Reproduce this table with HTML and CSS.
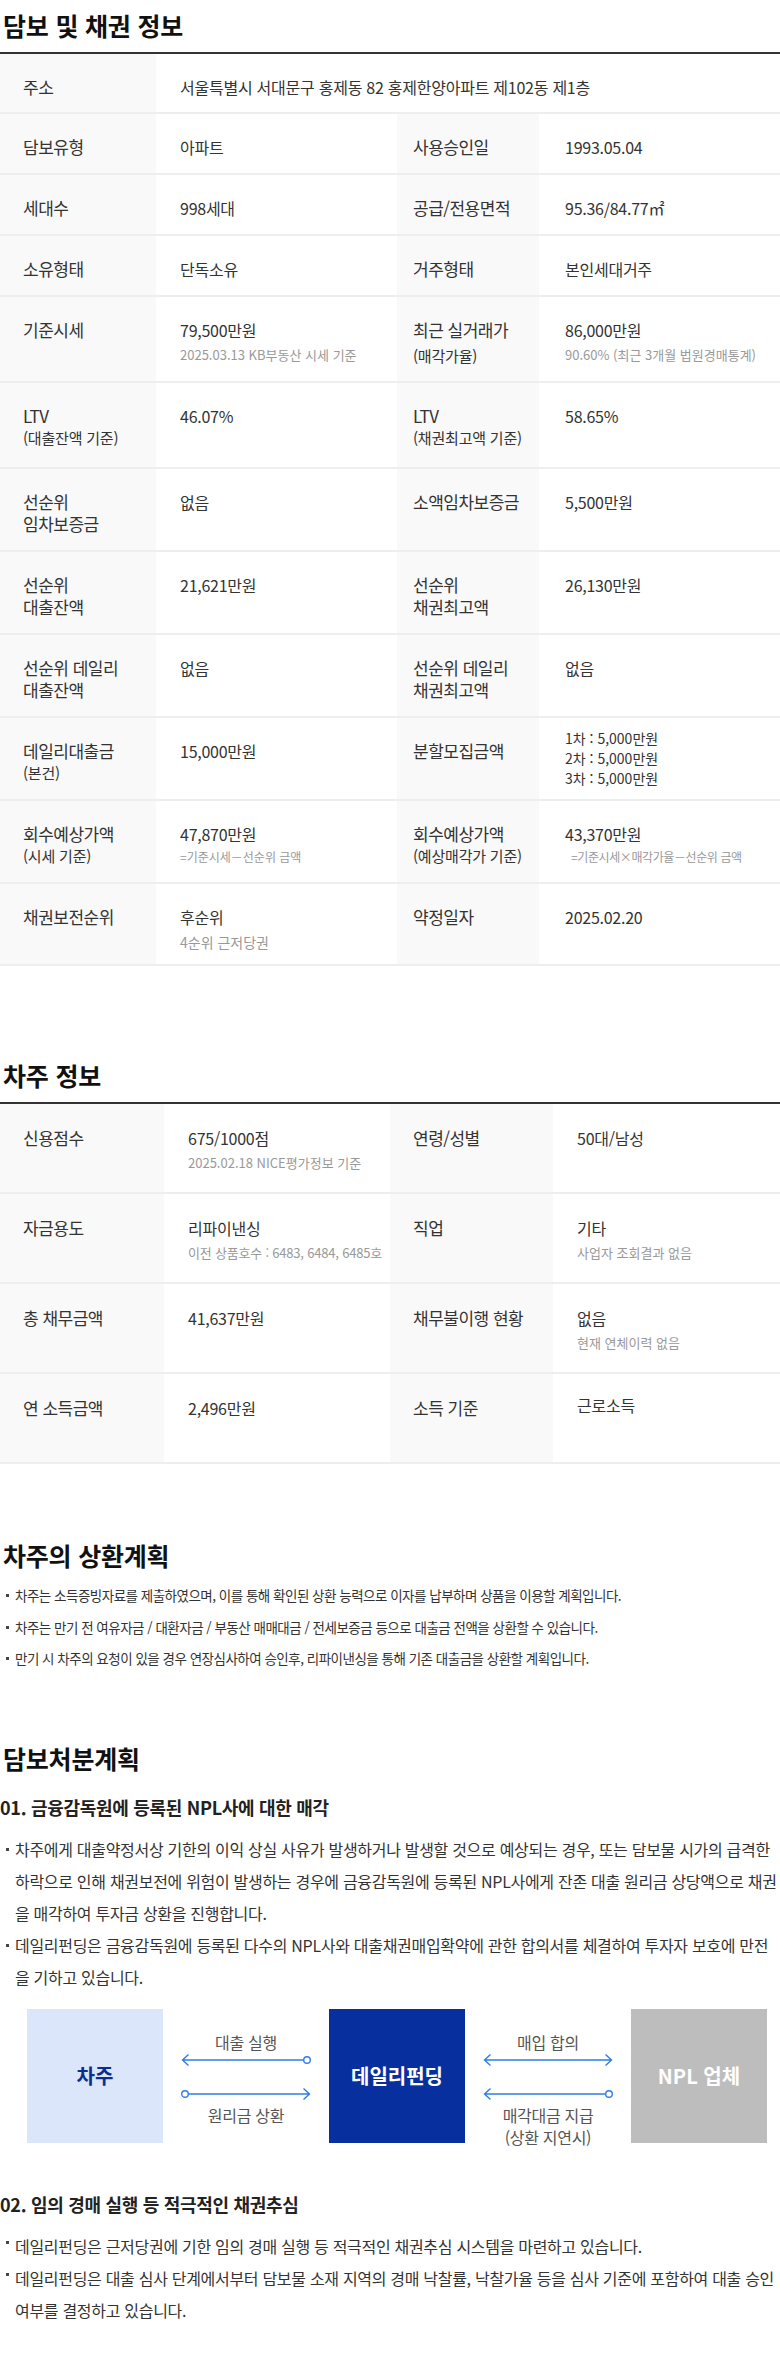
FILE: index.html
```html
<!DOCTYPE html>
<html lang="ko">
<head>
<meta charset="utf-8">
<title>담보 및 채권 정보</title>
<link rel="stylesheet" href="styles.css">
</head>
<body>
<main class="page">

  <section class="sec">
    <h2 class="sec-title">담보 및 채권 정보</h2>
    <div class="info info--a">
      <div class="row row--full">
        <div class="th">주소</div>
        <div class="td">서울특별시 서대문구 홍제동 82 홍제한양아파트 제102동 제1층</div>
      </div>
      <div class="row">
        <div class="th">담보유형</div>
        <div class="td">아파트</div>
        <div class="th">사용승인일</div>
        <div class="td">1993.05.04</div>
      </div>
      <div class="row">
        <div class="th">세대수</div>
        <div class="td">998세대</div>
        <div class="th">공급/전용면적</div>
        <div class="td">95.36/84.77㎡</div>
      </div>
      <div class="row">
        <div class="th">소유형태</div>
        <div class="td">단독소유</div>
        <div class="th">거주형태</div>
        <div class="td">본인세대거주</div>
      </div>
      <div class="row row--tall">
        <div class="th">기준시세</div>
        <div class="td">79,500만원<p class="note">2025.03.13 KB부동산 시세 기준</p></div>
        <div class="th th--loose">최근 실거래가<span class="th-sub">(매각가율)</span></div>
        <div class="td">86,000만원<p class="note">90.60% (최근 3개월 법원경매통계)</p></div>
      </div>
      <div class="row row--tall">
        <div class="th">LTV<span class="th-sub">(대출잔액 기준)</span></div>
        <div class="td">46.07%</div>
        <div class="th">LTV<span class="th-sub">(채권최고액 기준)</span></div>
        <div class="td">58.65%</div>
      </div>
      <div class="row">
        <div class="th">선순위<br>임차보증금</div>
        <div class="td">없음</div>
        <div class="th th--shift">소액임차보증금</div>
        <div class="td">5,500만원</div>
      </div>
      <div class="row">
        <div class="th">선순위<br>대출잔액</div>
        <div class="td">21,621만원</div>
        <div class="th">선순위<br>채권최고액</div>
        <div class="td">26,130만원</div>
      </div>
      <div class="row">
        <div class="th">선순위 데일리<br>대출잔액</div>
        <div class="td">없음</div>
        <div class="th">선순위 데일리<br>채권최고액</div>
        <div class="td">없음</div>
      </div>
      <div class="row">
        <div class="th">데일리대출금<span class="th-sub">(본건)</span></div>
        <div class="td">15,000만원</div>
        <div class="th">분할모집금액</div>
        <div class="td td--center">
          <ul class="split">
            <li>1차 : 5,000만원</li>
            <li>2차 : 5,000만원</li>
            <li>3차 : 5,000만원</li>
          </ul>
        </div>
      </div>
      <div class="row">
        <div class="th">회수예상가액<span class="th-sub">(시세 기준)</span></div>
        <div class="td">47,870만원<p class="note note--xs">=기준시세－선순위 금액</p></div>
        <div class="th">회수예상가액<span class="th-sub">(예상매각가 기준)</span></div>
        <div class="td">43,370만원<p class="note note--xs note--indent">=기준시세×매각가율－선순위 금액</p></div>
      </div>
      <div class="row">
        <div class="th">채권보전순위</div>
        <div class="td td--tight">후순위<p class="note note--md">4순위 근저당권</p></div>
        <div class="th">약정일자</div>
        <div class="td">2025.02.20</div>
      </div>
    </div>
  </section>

  <section class="sec sec--borrower">
    <h2 class="sec-title">차주 정보</h2>
    <div class="info info--b">
      <div class="row">
        <div class="th">신용점수</div>
        <div class="td">675/1000점<p class="note">2025.02.18 NICE평가정보 기준</p></div>
        <div class="th">연령/성별</div>
        <div class="td">50대/남성</div>
      </div>
      <div class="row">
        <div class="th">자금용도</div>
        <div class="td">리파이낸싱<p class="note note--nowrap">이전 상품호수 : 6483, 6484, 6485호</p></div>
        <div class="th">직업</div>
        <div class="td">기타<p class="note">사업자 조회결과 없음</p></div>
      </div>
      <div class="row">
        <div class="th">총 채무금액</div>
        <div class="td">41,637만원</div>
        <div class="th">채무불이행 현황</div>
        <div class="td">없음<p class="note">현재 연체이력 없음</p></div>
      </div>
      <div class="row">
        <div class="th">연 소득금액</div>
        <div class="td">2,496만원</div>
        <div class="th">소득 기준</div>
        <div class="td td--up">근로소득</div>
      </div>
    </div>
  </section>

  <section class="sec sec--repay">
    <h2 class="sec-title sec-title--plain">차주의 상환계획</h2>
    <ul class="bullets bullets--sm">
      <li>차주는 소득증빙자료를 제출하였으며, 이를 통해 확인된 상환 능력으로 이자를 납부하며 상품을 이용할 계획입니다.</li>
      <li>차주는 만기 전 여유자금 / 대환자금 / 부동산 매매대금 / 전세보증금 등으로 대출금 전액을 상환할 수 있습니다.</li>
      <li>만기 시 차주의 요청이 있을 경우 연장심사하여 승인후, 리파이낸싱을 통해 기존 대출금을 상환할 계획입니다.</li>
    </ul>
  </section>

  <section class="sec sec--dispose">
    <h2 class="sec-title sec-title--plain">담보처분계획</h2>

    <h3 class="sub-title">01. 금융감독원에 등록된 NPL사에 대한 매각</h3>
    <ul class="bullets">
      <li>차주에게 대출약정서상 기한의 이익 상실 사유가 발생하거나 발생할 것으로 예상되는 경우, 또는 담보물 시가의 급격한 하락으로 인해 채권보전에 위험이 발생하는 경우에 금융감독원에 등록된 NPL사에게 잔존 대출 원리금 상당액으로 채권을 매각하여 투자금 상환을 진행합니다.</li>
      <li>데일리펀딩은 금융감독원에 등록된 다수의 NPL사와 대출채권매입확약에 관한 합의서를 체결하여 투자자 보호에 만전을 기하고 있습니다.</li>
    </ul>

    <div class="flow">
      <div class="box box--borrower">차주</div>
      <div class="link">
        <span class="link-label">대출 실행</span>
        <svg class="arrow" width="130" height="14" viewBox="0 0 130 14"><path d="M7.5 1.5 L1.5 7 L7.5 12.5 M1.5 7 H122.5" fill="none" stroke="#2f7de6" stroke-width="1.4"/><circle cx="126" cy="7" r="3.3" fill="#fff" stroke="#2f7de6" stroke-width="1.4"/></svg>
        <svg class="arrow arrow--second" width="130" height="14" viewBox="0 0 130 14"><circle cx="4" cy="7" r="3.3" fill="#fff" stroke="#2f7de6" stroke-width="1.4"/><path d="M7.5 7 H128.5 M122.5 1.5 L128.5 7 L122.5 12.5" fill="none" stroke="#2f7de6" stroke-width="1.4"/></svg>
        <span class="link-label link-label--below">원리금 상환</span>
      </div>
      <div class="box box--daily">데일리펀딩</div>
      <div class="link">
        <span class="link-label">매입 합의</span>
        <svg class="arrow" width="130" height="14" viewBox="0 0 130 14"><path d="M7.5 1.5 L1.5 7 L7.5 12.5 M1.5 7 H128.5 M122.5 1.5 L128.5 7 L122.5 12.5" fill="none" stroke="#2f7de6" stroke-width="1.4"/></svg>
        <svg class="arrow arrow--second" width="130" height="14" viewBox="0 0 130 14"><path d="M7.5 1.5 L1.5 7 L7.5 12.5 M1.5 7 H122.5" fill="none" stroke="#2f7de6" stroke-width="1.4"/><circle cx="126" cy="7" r="3.3" fill="#fff" stroke="#2f7de6" stroke-width="1.4"/></svg>
        <span class="link-label link-label--below">매각대금 지급<br>(상환 지연시)</span>
      </div>
      <div class="box box--npl">NPL 업체</div>
    </div>

    <h3 class="sub-title sub-title--second">02. 임의 경매 실행 등 적극적인 채권추심</h3>
    <ul class="bullets bullets--high">
      <li>데일리펀딩은 근저당권에 기한 임의 경매 실행 등 적극적인 채권추심 시스템을 마련하고 있습니다.</li>
      <li>데일리펀딩은 대출 심사 단계에서부터 담보물 소재 지역의 경매 낙찰률, 낙찰가율 등을 심사 기준에 포함하여 대출 승인 여부를 결정하고 있습니다.</li>
    </ul>
  </section>

</main>
</body>
</html>
```

FILE: styles.css
```css
* {
  box-sizing: border-box;
  margin: 0;
  padding: 0;
}

html, body {
  background: #fff;
}

body {
  margin: 0;
  font-family: "Noto Sans CJK KR", "Noto Sans", sans-serif;
  color: #333;
}

.page {
  width: 780px;
  padding-bottom: 50px;
}

/* section titles */
.sec-title {
  font-size: 25px;
  font-weight: 700;
  line-height: 34px;
  padding: 8px 0 10px 3px;
  color: #111;
  letter-spacing: -0.2px;
}

.sec-title--plain {
  padding-bottom: 8px;
}

.sec--borrower {
  margin-top: 84px;
}

.sec--repay {
  margin-top: 66px;
}

.sec--dispose {
  margin-top: 58px;
}

/* info tables */
.info {
  border-top: 2px solid #333;
}

.row {
  display: grid;
  border-bottom: 2px solid #eeeeee;
}

.info--a .row {
  grid-template-columns: 156px 241px 142px 241px;
  min-height: 61px;
}

.info--a .row--full {
  grid-template-columns: 156px 624px;
  min-height: 60px;
}

.info--a .row--tall {
  min-height: 86px;
}

.info--b .row {
  grid-template-columns: 164px 226px 163px 227px;
  min-height: 90px;
}

.th,
.td {
  line-height: 22px;
  padding: 22px 8px 15px 24px;
  color: #333;
}

.row--full .th,
.row--full .td {
  padding-bottom: 14px;
}

.th {
  background: #f9f9f9;
  padding-left: 23px;
  font-size: 17px;
  letter-spacing: -0.5px;
}

.td {
  font-size: 16px;
  letter-spacing: -0.25px;
}

.th-sub {
  display: block;
  font-size: 15px;
  letter-spacing: -0.2px;
}

.info--a .th:nth-child(3) {
  padding-left: 16px;
}

.info--a .td:nth-child(4) {
  padding-left: 26px;
}

.th--loose {
  line-height: 26px;
  padding-top: 20px;
  padding-bottom: 12px;
}

.info--a .th--shift {
  padding-left: 12px;
  padding-right: 0;
  white-space: nowrap;
}

.td--center {
  align-self: center;
  padding-top: 0;
  padding-bottom: 2px;
}

.td--tight {
  padding-bottom: 13px;
}

.info--b .th,
.info--b .td {
  padding-top: 23px;
}

.info--b .td:nth-child(2) {
  padding-right: 0;
}

.info--b .td.td--up {
  padding-top: 20px;
}

.note {
  font-size: 13px;
  line-height: 20px;
  margin-top: 4px;
  color: #999;
  letter-spacing: 0;
}

.note--nowrap {
  white-space: nowrap;
  letter-spacing: -0.2px;
}

.note--xs {
  font-size: 12px;
  line-height: 17px;
  margin-top: 3px;
}

.note--md {
  font-size: 14px;
  line-height: 18px;
  margin-top: 5px;
}

.note--indent {
  padding-left: 6px;
  letter-spacing: -0.4px;
}

.split {
  list-style: none;
  font-size: 14px;
  line-height: 20px;
  letter-spacing: 0;
}

/* bullet lists */
.bullets {
  list-style: none;
  font-size: 16px;
  line-height: 32px;
  color: #333;
  letter-spacing: -0.3px;
}

.bullets li {
  position: relative;
  padding-left: 15px;
}

.bullets li::before {
  content: "";
  position: absolute;
  left: 6px;
  top: 15px;
  width: 3px;
  height: 3px;
  background: #444;
}

.bullets--sm {
  font-size: 13.5px;
  line-height: 31.5px;
  letter-spacing: -0.5px;
}

.bullets--sm li::before {
  top: 14px;
}

.bullets--high li::before {
  top: 11px;
}

.sub-title {
  font-size: 18px;
  font-weight: 700;
  line-height: 26px;
  color: #222;
  margin-top: 11px;
  margin-bottom: 13px;
  letter-spacing: -0.3px;
}

.sub-title--second {
  margin-top: 43px;
}

/* flow diagram */
.flow {
  display: flex;
  margin-top: 16px;
  padding-left: 27px;
}

.box {
  width: 136px;
  height: 134px;
  display: flex;
  align-items: center;
  justify-content: center;
  font-size: 20px;
  font-weight: 700;
  flex: none;
}

.box--borrower {
  background: #dce6fb;
  color: #0b2f8f;
}

.box--daily {
  background: #07309e;
  color: #fff;
}

.box--npl {
  background: #bdbdbd;
  color: #fff;
}

.link {
  width: 166px;
  flex: none;
  display: flex;
  flex-direction: column;
  align-items: center;
  padding-top: 22px;
}

.link-label {
  font-size: 16px;
  line-height: 22px;
  color: #555;
  text-align: center;
  letter-spacing: -0.3px;
}

.link-label--below {
  margin-top: 3px;
}

.arrow {
  display: block;
}

.arrow--second {
  margin-top: 20px;
}
```
